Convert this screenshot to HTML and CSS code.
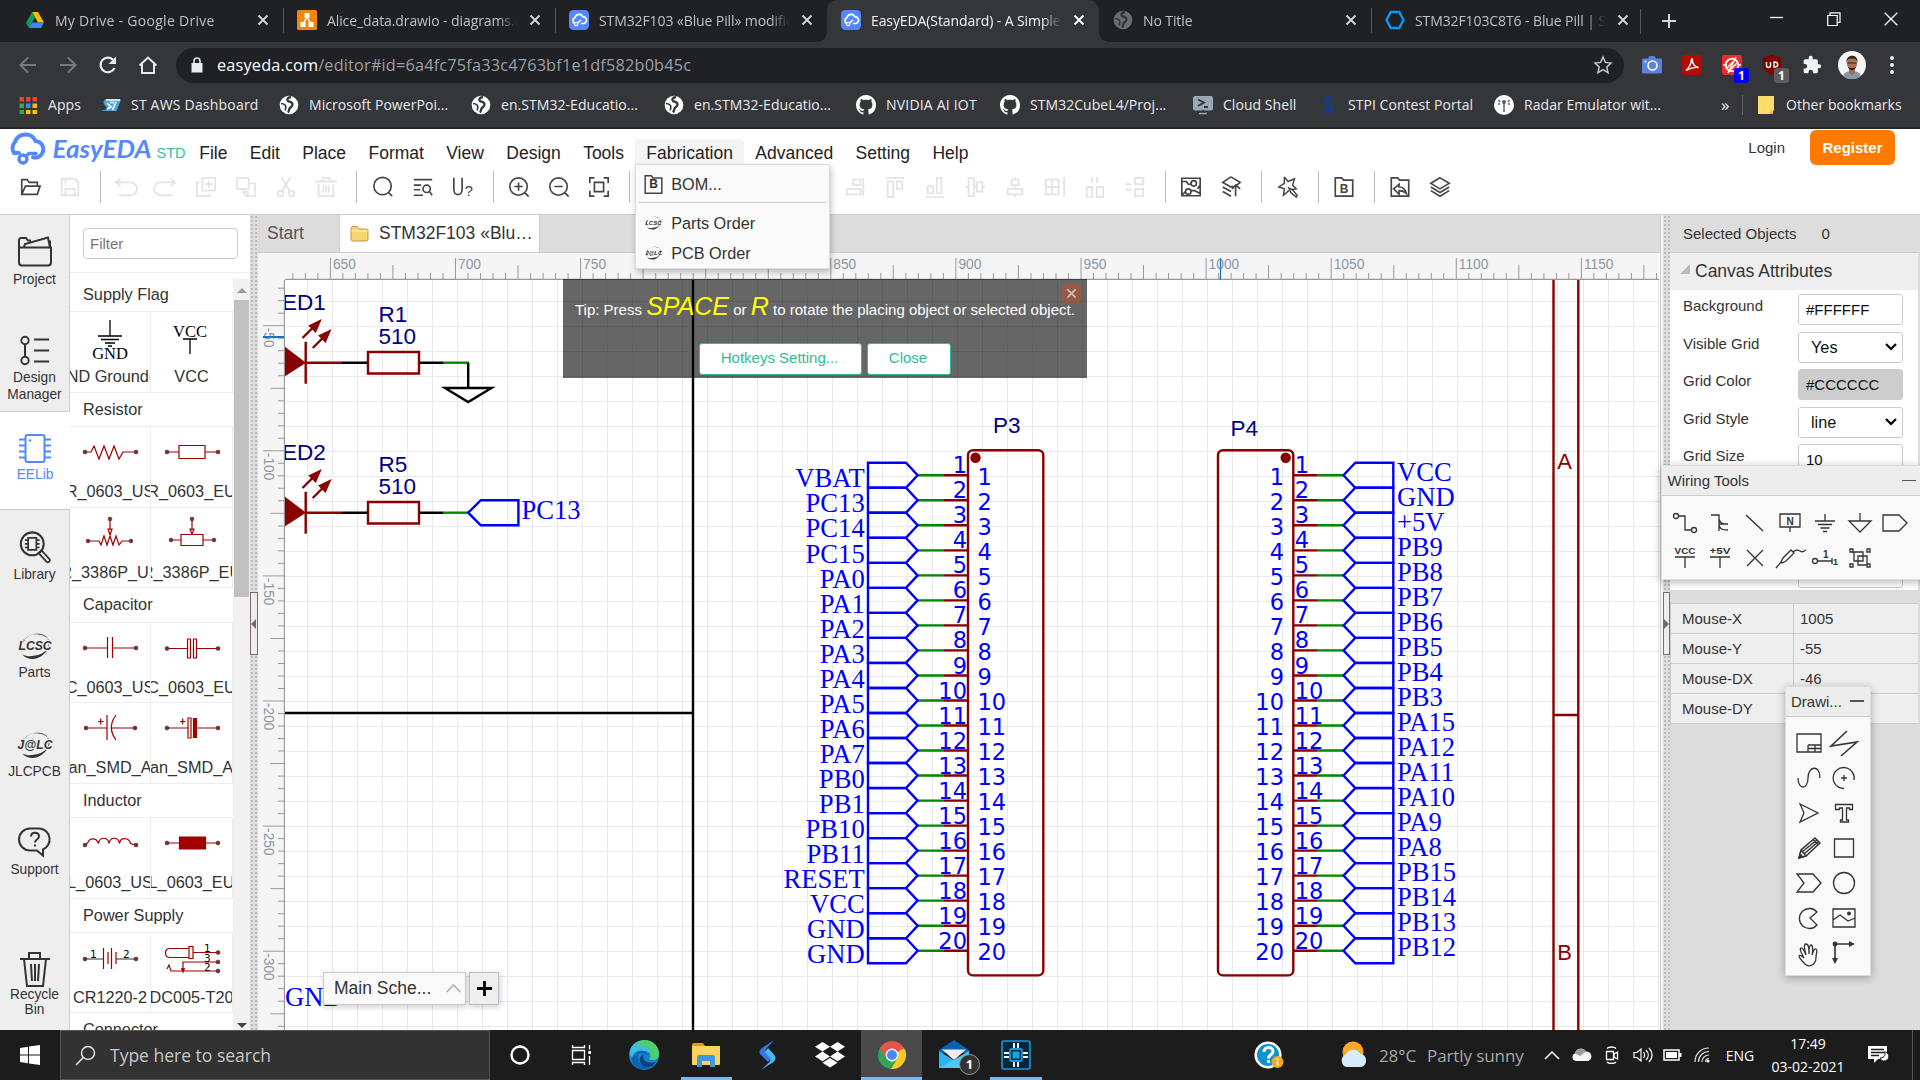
FILE: index.html
```html
<!DOCTYPE html>
<html lang="en">
<head>
<meta charset="utf-8">
<title>EasyEDA(Standard)</title>
<link rel="stylesheet" href="styles.css">
</head>
<body>
<svg class="defs" width="0" height="0">
  <symbol id="close" viewBox="0 0 12 12"><path d="M1.5 1.5l9 9M10.5 1.5l-9 9" stroke="currentColor" stroke-width="1.8"/></symbol>
  <symbol id="globe" viewBox="0 0 20 20"><circle cx="10" cy="10" r="9.3" fill="currentColor"/><path d="M12 2c-3.500.5-4.500 2.500-3 4 1.500 1 4.500.8 4.500 3.500 0 2-2 2.500-3 4-.6 1-.4 2.500-1.500 4" fill="none" stroke="#35363a" stroke-width="2.300"/><path d="M2 8.500c2 .3 4.500 1 4.800 3 .2 1.500-.6 2.500-.3 4" fill="none" stroke="#35363a" stroke-width="1.600"/></symbol>
  <symbol id="eda" viewBox="0 0 20 20"><rect width="20" height="20" rx="4.500" fill="#5588ff"/><path d="M7 13.800H6A3.500 3.500 0 0 1 6 7.500a4.300 4.300 0 0 1 8-.6 3.300 3.300 0 0 1 .4 6.600h-2.500" fill="none" stroke="#fff" stroke-width="1.700"/><circle cx="7.200" cy="14" r="1.700" fill="#5588ff" stroke="#fff" stroke-width="1.300"/><path d="M8.500 13l3.500-3" stroke="#fff" stroke-width="1.600"/></symbol>
  <symbol id="github" viewBox="0 0 16 16"><path fill="#fff" d="M8 0C3.580 0 0 3.580 0 8c0 3.540 2.290 6.530 5.470 7.590.4.070.55-.17.55-.38 0-.19-.01-.82-.01-1.490-2.010.37-2.530-.49-2.690-.94-.09-.23-.48-.94-.82-1.130-.28-.15-.68-.52-.01-.53.63-.01 1.080.58 1.230.82.72 1.210 1.870.87 2.330.66.070-.52.28-.87.51-1.070-1.780-.2-3.640-.89-3.640-3.950 0-.87.31-1.590.82-2.150-.08-.2-.36-1.020.08-2.120 0 0 .67-.21 2.200.82.64-.18 1.320-.27 2-.27s1.360.09 2 .27c1.530-1.040 2.200-.82 2.200-.82.44 1.100.16 1.920.08 2.120.51.56.82 1.270.82 2.150 0 3.070-1.870 3.750-3.650 3.950.29.25.54.73.54 1.480 0 1.070-.01 1.930-.01 2.200 0 .21.15.46.55.38A8.010 8.010 0 0 0 16 8c0-4.420-3.580-8-8-8z"/></symbol>
  <symbol id="lcsc" viewBox="0 0 30 26"><path d="M5 7C10 0 24-1 28 7c-3-4-9-5-13-5-4 0-7 2-10 5zM25 18C20 27 8 27 3 21c4 2 8 2 12 1 4-.5 7-2 10-4z" fill="#333"/><path d="M27 7c3 5 0 10-4 13M3 18C1 14 2 10 5 7" fill="none" stroke="#333" stroke-width="1.200"/></symbol>
  <symbol id="bom" viewBox="0 0 24 24"><path d="M2.500 2v20h19V4.500h-10L9.500 2z" fill="none" stroke="#444" stroke-width="1.700"/></symbol>
</svg>

<header class="tabstrip">
  <div class="tab wide"><svg class="fav" viewBox="0 0 20 20"><path d="M7 2h6l6 10.500h-6z" fill="#fbbc04"/><path d="M7 2l3 5.200L4 18l-3-5z" fill="#0f9d58"/><path d="M7 12.500h12L16 18H4z" fill="#4285f4"/></svg><span>My Drive - Google Drive</span><svg class="x"><use href="#close"/></svg></div>
  <div class="tab line"><svg class="fav" viewBox="0 0 20 20"><rect width="20" height="20" rx="1.500" fill="#f08705"/><path d="M10 7L6 14M10 7l4 7" stroke="#fff" stroke-width="1.500"/><path d="M7.500 3h5v5h-5zM3.500 12h5v5h-5zM11.500 12h5v5h-5z" fill="#fff"/></svg><span>Alice_data.drawio - diagrams.net</span><svg class="x"><use href="#close"/></svg></div>
  <div class="tab line"><svg class="fav"><use href="#eda"/></svg><span>STM32F103 «Blue Pill» modified</span><svg class="x"><use href="#close"/></svg></div>
  <div class="tab active"><svg class="fav"><use href="#eda"/></svg><span>EasyEDA(Standard) - A Simple and</span><svg class="x"><use href="#close"/></svg></div>
  <div class="tab"><svg class="fav dim"><use href="#globe"/></svg><span>No Title</span><svg class="x"><use href="#close"/></svg></div>
  <div class="tab line"><svg class="fav" viewBox="0 0 20 20"><path d="M5.800 2h8.400l4.300 8-4.300 8H5.800L1.500 10z" fill="none" stroke="#0a9bf0" stroke-width="2.400"/></svg><span>STM32F103C8T6 - Blue Pill | STM</span><svg class="x"><use href="#close"/></svg></div>
  <div class="newtab"><svg width="16" height="16" viewBox="0 0 16 16"><path d="M8 1v14M1 8h14" stroke="#d5d7da" stroke-width="2"/></svg></div>
  <div class="wctl">
    <svg width="14" height="14" viewBox="0 0 14 14"><path d="M0 5.500h13" stroke="#fff" stroke-width="1.300"/></svg>
    <svg width="14" height="14" viewBox="0 0 14 14"><path d="M.7 3.500h9.500v10H.7zM3 3.500V.8h10v9.700h-2.500" fill="none" stroke="#fff" stroke-width="1.200"/></svg>
    <svg width="14" height="14" viewBox="0 0 14 14"><path d="M.7.700l12.600 12.600M13.300.700L.7 13.300" stroke="#fff" stroke-width="1.300"/></svg>
  </div>
</header>

<div class="navbar">
  <div class="nav"><svg width="20" height="20" viewBox="0 0 20 20"><path d="M18 10H3M10 2.500L2.500 10l7.500 7.500" fill="none" stroke="#77797c" stroke-width="2"/></svg></div>
  <div class="nav"><svg width="20" height="20" viewBox="0 0 20 20"><path d="M2 10h15M10 2.500l7.500 7.500-7.500 7.500" fill="none" stroke="#77797c" stroke-width="2"/></svg></div>
  <div class="nav"><svg width="20" height="20" viewBox="0 0 20 20"><path d="M16.500 13A7.300 7.300 0 1 1 15 4.700" fill="none" stroke="#e8eaed" stroke-width="2.200"/><path d="M18 1.500V9h-7.500z" fill="#e8eaed"/></svg></div>
  <div class="nav"><svg width="20" height="20" viewBox="0 0 20 20"><path d="M1.500 10.500L10 2.500l8.500 8M4 9v9h12V9" fill="none" stroke="#e8eaed" stroke-width="2"/></svg></div>
  <div class="omnibox"><svg width="12" height="16" viewBox="0 0 12 16"><path d="M.5 6h11v9.500H.5z" fill="#e8eaed"/><path d="M3 6V4a3 3 0 0 1 6 0v2" fill="none" stroke="#e8eaed" stroke-width="1.600"/></svg><div class="url">easyeda.com<i>/editor#id=6a4fc75fa33c4763bf1e1df582b0b45c</i></div><svg width="20" height="20" viewBox="0 0 20 20"><path d="M10 2l2.400 5.400 5.600.6-4.200 3.900 1.200 5.800-5-3-5 3 1.200-5.800L2 8l5.600-.6z" fill="none" stroke="#c5c7ca" stroke-width="1.500"/></svg></div>
  <div class="exts">
    <svg width="20" height="20" viewBox="0 0 20 20"><path d="M1 3.500h5L7.500 1h5L14 3.500h5a1 1 0 0 1 1 1V17a1.500 1.500 0 0 1-1.500 1.500h-17A1.500 1.500 0 0 1 0 17V4.500z" fill="#5b82dc"/><circle cx="10.500" cy="10.500" r="4.500" fill="none" stroke="#fff" stroke-width="1.600"/><circle cx="3.500" cy="6.500" r="1" fill="#fff"/></svg>
    <svg width="20" height="20" viewBox="0 0 20 20"><rect width="20" height="20" rx="3" fill="#b30b00"/><path d="M4 15.500c2.500-2 5.500-7 5.500-11 0-1 1.200-1 1 .5-.5 4 2.500 7 6 7.500-4-.5-8 .5-12.500 3z" fill="none" stroke="#fff" stroke-width="1.400"/></svg>
    <div class="ext"><svg width="20" height="20" viewBox="0 0 20 20"><rect width="20" height="20" rx="2.500" fill="#ee2b2b"/><circle cx="10" cy="10" r="6.300" fill="none" stroke="#fff" stroke-width="1.800"/><path d="M14 2L6 18M5 13l8-8M8 15l7-7M1 10h4M15 10h4" stroke="#fff" stroke-width="1.500"/></svg><b class="badge blue">1</b></div>
    <div class="ext"><svg width="20" height="20" viewBox="0 0 20 20"><path d="M10 0l9 3v7c0 5-4 8-9 10-5-2-9-5-9-10V3z" fill="#800000"/><path d="M4.500 7v3.500a2 2 0 0 0 4 0V7M12 7v5c5 0 5-5 0-5z" fill="none" stroke="#fff" stroke-width="1.400"/></svg><b class="badge">1</b></div>
    <svg width="20" height="20" viewBox="0 0 24 24"><path fill="#f1f3f4" d="M20.500 11H19V7a2 2 0 0 0-2-2h-4V3.500a2.500 2.500 0 0 0-5 0V5H4a2 2 0 0 0-2 2v3.800h1.500a2.700 2.700 0 0 1 0 5.400H2V20a2 2 0 0 0 2 2h3.800v-1.500a2.700 2.700 0 0 1 5.400 0V22H17a2 2 0 0 0 2-2v-4h1.500a2.500 2.500 0 0 0 0-5z"/></svg>
    <svg width="28" height="28" viewBox="0 0 28 28"><circle cx="14" cy="14" r="14" fill="#f5f5f5"/><path d="M5 25c1-4 5-5 9-5s8 1 9 5a14 14 0 0 1-18 0z" fill="#8a97a8"/><path d="M11 16h6v6l-3 2-3-2z" fill="#a06a4b"/><ellipse cx="14" cy="12.500" rx="5" ry="6.500" fill="#a8714f"/><path d="M8.500 12c-1-9 12-10 11 0-1-4-3-5-5.500-4.500C11 7 9.500 8 8.500 12zM10 16c2 1.500 6 1.500 8 0-1 4-7 4-8 0z" fill="#2a1c16"/><path d="M9.500 12h9" stroke="#333" stroke-width="1.200"/></svg>
    <svg width="6" height="20" viewBox="0 0 6 20"><circle cx="3" cy="3" r="2" fill="#e8eaed"/><circle cx="3" cy="10" r="2" fill="#e8eaed"/><circle cx="3" cy="17" r="2" fill="#e8eaed"/></svg>
  </div>
</div>

<div class="bookmarks">
  <div class="bm"><svg viewBox="0 0 20 20"><path d="M1.500 2h4.500v4.500H1.500zM8 2h4.500v4.500H8zM14.500 2H19v4.500h-4.500z" fill="#ea4335"/><path d="M1.500 8.500h4.500V13H1.500z" fill="#34a853"/><path d="M8 8.500h4.500V13H8z" fill="#4285f4"/><path d="M14.500 8.500H19V13h-4.500zM14.500 15H19v4h-4.500zM8 15h4.500v4H8z" fill="#fbbc04"/><path d="M1.500 15h4.500v4H1.500z" fill="#34a853"/></svg>Apps</div>
  <div class="bm"><svg viewBox="0 0 20 20"><path d="M4 4.500h16L15.500 16H0c6-1 7-3 4-5.500C2 8.500 2 6 4 4.500z" fill="#4aa3df"/><path d="M5 5h14M9 7.500h4M6 8l4 4-4 2M15 7l-3.500 8" fill="none" stroke="#fff" stroke-width="1.700"/></svg>ST AWS Dashboard</div>
  <div class="bm"><svg class="white"><use href="#globe"/></svg>Microsoft PowerPoi...</div>
  <div class="bm"><svg class="white"><use href="#globe"/></svg>en.STM32-Educatio...</div>
  <div class="bm"><svg class="white"><use href="#globe"/></svg>en.STM32-Educatio...</div>
  <div class="bm"><svg><use href="#github"/></svg>NVIDIA AI IOT</div>
  <div class="bm"><svg><use href="#github"/></svg>STM32CubeL4/Proj...</div>
  <div class="bm"><svg viewBox="0 0 20 20"><rect x="0" y="1" width="20" height="14.500" rx="2" fill="#9aa7b5"/><path d="M5 4.500l6 3-6 3.500M11 12h4M6 18.500h8M10 15v4" fill="none" stroke="#35363a" stroke-width="1.900"/><path d="M6 18.500h8" stroke="#9aa7b5" stroke-width="1.500"/></svg>Cloud Shell</div>
  <div class="bm"><svg viewBox="0 0 20 20"><path d="M14.500 5C12 2 6 3 6.500 6.500c.5 3.500 7.500 3 7.500 7 0 4-6 4-8.500 1.500" fill="none" stroke="#0f3c8c" stroke-width="3.400"/></svg>STPI Contest Portal</div>
  <div class="bm"><svg viewBox="0 0 20 20"><circle cx="10" cy="10" r="10" fill="#fff"/><circle cx="10" cy="7" r="2" fill="#555"/><path d="M10 8v9M6 7l-1.500-2M14 7l1.500-2M6 9H4M14 9h2" stroke="#567" stroke-width="1.500"/></svg>Radar Emulator wit...</div>
  <div class="bm more">»</div>
  <div class="bm other"><svg viewBox="0 0 20 20"><path d="M2 1h16v14l-2 4H2z" fill="#fbdc6d"/><path d="M13 19h4v-5z" fill="#e5ba3d"/></svg>Other bookmarks</div>
</div>

<div class="apphead">
  <div class="menubar">
    <svg class="logo" width="188" height="38" viewBox="0 0 188 38"><path d="M19 21H14A9 9 0 0 1 15 10 11 11 0 0 1 35.500 9a8.300 8.300 0 0 1 3 15.800c-2 .8-4 1-5.500.5" transform="translate(0 3)" fill="none" stroke="#5588ff" stroke-width="4" stroke-linecap="round"/><circle cx="23" cy="30" r="4" fill="#fff" stroke="#5588ff" stroke-width="3.400"/><path d="M26 27l3-2.500h7" fill="none" stroke="#5588ff" stroke-width="3.400" stroke-linecap="round"/><text x="52.500" y="28.500" class="brand" textLength="99" lengthAdjust="spacingAndGlyphs">EasyEDA</text><text x="156.500" y="29" class="std">STD</text></svg>
    <nav class="menus"><span>File</span><span>Edit</span><span>Place</span><span>Format</span><span>View</span><span>Design</span><span>Tools</span>
      <span class="open">Fabrication
        <div class="dropdown">
          <div class="mi"><svg width="21" height="21"><use href="#bom"/></svg><b>B</b>BOM...</div>
          <hr>
          <div class="mi"><svg width="17" height="14"><use href="#lcsc"/></svg><em>LCSC</em>Parts Order</div>
          <div class="mi"><svg width="17" height="14"><use href="#lcsc"/></svg><em>J@LC</em>PCB Order</div>
        </div>
      </span><span>Advanced</span><span>Setting</span><span>Help</span></nav>
    <div class="account"><span>Login</span><button class="register">Register</button></div>
  </div>
  <div class="tools" id="tools"></div>
</div>

<main class="work">
  <aside class="sidenav">
    <div class="sn"><svg width="36" height="32" viewBox="0 0 36 32"><path d="M2 12V4.500A2 2 0 0 1 4 2.500h5l2 2.500h3M2 12h32v15a3 3 0 0 1-3 3H5a3 3 0 0 1-3-3zM7 11.500l1-3L31 2l2 10M33 5v7" fill="none" stroke="#333" stroke-width="2"/></svg>Project</div>
    <div class="sn"><svg width="32" height="32" viewBox="0 0 32 32"><circle cx="6" cy="6" r="3.700" fill="none" stroke="#333" stroke-width="1.900"/><circle cx="6" cy="26" r="3.700" fill="none" stroke="#333" stroke-width="1.900"/><path d="M6 10v12M15 5h15M15 16h15M15 27h15" stroke="#333" stroke-width="2"/></svg>Design<br>Manager</div>
    <div class="sn on"><svg width="32" height="32" viewBox="0 0 32 32"><rect x="6.500" y="2.500" width="19" height="27" rx="2" fill="none" stroke="#5588ff" stroke-width="2"/><circle cx="11" cy="8" r="1.300" fill="#5588ff"/><path d="M0 7h6M0 13h6M0 19h6M0 25h6M26 7h6M26 13h6M26 19h6M26 25h6" stroke="#5588ff" stroke-width="1.800"/></svg>EELib</div>
    <div class="sn"><svg width="34" height="36" viewBox="0 0 34 36"><circle cx="14" cy="14" r="12.500" fill="none" stroke="#333" stroke-width="2.200"/><path d="M9.500 7.500h9v13h-9zM6 10h3M6 14h3M6 18h3M19 10h3M19 14h3M19 18h3" fill="none" stroke="#333" stroke-width="1.900"/><path d="M21 24l3-3 8.500 9.500a2 2 0 0 1-3 3z" fill="none" stroke="#333" stroke-width="2"/></svg>Library</div>
    <div class="sn"><svg width="34" height="26" viewBox="-2 0 34 26"><use href="#lcsc" width="30" height="26"/><text x="15" y="16.500" class="lc" text-anchor="middle">LCSC</text></svg>Parts</div>
    <div class="sn"><svg width="34" height="26" viewBox="-2 0 34 26"><use href="#lcsc" width="30" height="26"/><text x="15" y="16.500" class="lc" text-anchor="middle">J@LC</text></svg>JLCPCB</div>
    <div class="sn"><svg width="36" height="32" viewBox="0 0 36 32"><path d="M13 2h10a11 11 0 0 1 3 21v6l-6-5h-7A11 11 0 0 1 13 2z" fill="none" stroke="#333" stroke-width="2"/><path d="M14 10c0-5 8-5 8 0 0 3-4 2.500-4 6M18 18v2" fill="none" stroke="#333" stroke-width="2"/></svg>Support</div>
    <div class="sn bin"><svg width="30" height="36" viewBox="0 0 30 36"><path d="M0 8h30M9 8V2h11v6M4 8l3 27h16l3-27M11 13l1 17M15 13v17M19 13l-1 17" fill="none" stroke="#333" stroke-width="2"/></svg>Recycle<br>Bin</div>
  </aside>

  <section class="lib">
    <div class="filter"><input placeholder="Filter"></div>
    <div class="liblist">
      <div class="parts">
        <h4>Supply Flag</h4>
        <div class="row"><div class="cell"><svg viewBox="0 0 80 55"><path d="M40 8v16M28 24h24M31 27.500h18M35 31h10M38 34h4" stroke="#000" stroke-width="1.300"/><text x="40" y="47" class="tms" text-anchor="middle">GND</text></svg><span>GND Ground(U</span></div><div class="cell"><svg viewBox="0 0 80 55"><text x="38" y="24.500" class="tms" text-anchor="middle">VCC</text><path d="M31 27h14M38 27v15" stroke="#000" stroke-width="1.300"/></svg><span>VCC</span></div></div>
        <h4>Resistor</h4>
        <div class="row"><div class="cell"><svg viewBox="0 0 80 55" class="dk"><path d="M15 25h6l3-6 5 13 5-13 5 13 5-13 5 13 4-7h12"/><circle cx="15" cy="25" r="2"/><circle cx="66" cy="25" r="2"/></svg><span>R_0603_US</span></div><div class="cell"><svg viewBox="0 0 80 55" class="dk"><path d="M15 25h12M27 18.500h26v13H27zM53 25h13"/><circle cx="15" cy="25" r="2"/><circle cx="66" cy="25" r="2"/></svg><span>R_0603_EU</span></div></div>
        <div class="row"><div class="cell"><svg viewBox="0 0 80 55" class="dk"><path d="M18 33h11l2 4 3-9 3 9 3-9 3 9 3-9 3 9 3-4h9M40 11v11M38 21h4l-2 6z"/><circle cx="18" cy="33" r="1.900"/><circle cx="61" cy="33" r="1.900"/><circle cx="40" cy="11" r="1.900"/></svg><span>R_3386P_US</span></div><div class="cell"><svg viewBox="0 0 80 55" class="dk"><path d="M19 32h10M29 26.500h22v11H29zM51 32h11M40 11v11M38 21h4l-2 5z"/><circle cx="19" cy="32" r="1.900"/><circle cx="62" cy="32" r="1.900"/><circle cx="40" cy="11" r="1.900"/></svg><span>R_3386P_EU</span></div></div>
        <h4>Capacitor</h4>
        <div class="row"><div class="cell"><svg viewBox="0 0 80 55" class="dk"><path d="M15 25h22.500M42.500 25H66M37.500 14v21M42.500 14v21" stroke-width="1.600"/><circle cx="15" cy="25" r="2"/><circle cx="66" cy="25" r="2"/></svg><span>C_0603_US</span></div><div class="cell"><svg viewBox="0 0 80 55" class="dk"><path d="M15 25.500h20.500M44.500 25.500H66M35.500 16h3v19h-3zM41.500 16h3v19h-3z"/><circle cx="15" cy="25.500" r="2"/><circle cx="66" cy="25.500" r="2"/></svg><span>C_0603_EU</span></div></div>
        <div class="row"><div class="cell"><svg viewBox="0 0 80 55" class="dk"><path d="M16 25h21M41.500 25H65M37 12v25M46 12c-6 8-6 17 0 25M28 18.500h5.500M30.700 15.500v6"/><circle cx="16" cy="25" r="2"/><circle cx="65" cy="25" r="2"/></svg><span>an_SMD_A</span></div><div class="cell"><svg viewBox="0 0 80 55" class="dk"><path d="M15 25h21M45 25h21M36 15h3v20h-3zM28 18.500h5.500M30.700 15.500v6"/><path d="M41.500 15.500h3v19h-3z" class="fill"/><circle cx="15" cy="25" r="2"/><circle cx="66" cy="25" r="2"/></svg><span>an_SMD_A</span></div></div>
        <h4>Inductor</h4>
        <div class="row"><div class="cell"><svg viewBox="0 0 80 55" class="dk"><path d="M15 27l3-2.500c1-4 8-6 10.500 1 1-7 9.500-7 10.500 0 1-7 9.500-7 10.500 0 1-7 9.500-6 11 0l5 1.500"/><circle cx="15" cy="27" r="2"/><circle cx="66" cy="27" r="2"/></svg><span>L_0603_US</span></div><div class="cell"><svg viewBox="0 0 80 55" class="dk"><path d="M15 25h51"/><path d="M27.500 19h26v12h-26z" class="fill"/><circle cx="15" cy="25" r="2"/><circle cx="66" cy="25" r="2"/></svg><span>L_0603_EU</span></div></div>
        <h4>Power Supply</h4>
        <div class="row"><div class="cell"><svg viewBox="0 0 80 55" class="dk"><path d="M33.500 15v21M38 19v12M41.500 15v21M46 19v12"/><path d="M15 26h18M46 26h20" class="ink"/><circle cx="15" cy="26" r="2"/><circle cx="66" cy="26" r="2"/><text x="20" y="25">1</text><text x="53" y="25">2</text></svg><span>CR1220-2</span></div><div class="cell"><svg viewBox="0 0 80 55" class="dk"><path d="M37 15.500H18c-6 0-6 9 0 9h19M37 13.500h4v12h-4zM41 19.500h25M66 29H31v9M15 36l2-4 2 6h47M29.500 35l1.500 4 1.500-4"/><circle cx="66" cy="19.500" r="2"/><circle cx="66" cy="29" r="2"/><circle cx="66" cy="38" r="2"/><text x="52" y="18.500">1</text><text x="52" y="28.500">3</text><text x="52" y="37.500">2</text></svg><span>DC005-T20</span></div></div>
        <h4>Connector</h4>
      </div>
      <div class="scroll"><div class="up"></div><div class="thumb"></div><div class="down"></div></div>
    </div>
  </section>
  <div class="splitter"><div class="grip"><i></i></div></div>

  <section class="center">
    <div class="doctabs"><div class="dt">Start</div><div class="dt cur"><svg width="19" height="17" viewBox="0 0 19 17"><path d="M1 3.500A2 2 0 0 1 3 1.500h4L9 4h7a2 2 0 0 1 2 2v8a2 2 0 0 1-2 2H3a2 2 0 0 1-2-2z" fill="#f7d774" stroke="#c8952f"/><path d="M1.500 6h16" stroke="#fff2b8"/></svg>STM32F103 «Blu…</div></div>
    <div class="drawing">
      <svg id="ruler-h" class="ruler-h" viewBox="258 253 1401 27"></svg>
      <svg id="ruler-v" class="ruler-v" viewBox="258 280 27 750"></svg>
      <svg id="sheet" class="sheet" viewBox="285 280 1375 750"></svg>
      <div class="tip">
        <p>Tip: Press <em>SPACE</em> or <em>R</em> to rotate the placing object or selected object.</p>
        <div class="tipbtns"><button class="hk">Hotkeys Setting...</button><button>Close</button></div>
        <i class="tipx"><svg width="11" height="11"><use href="#close"/></svg></i>
      </div>
      <div class="sheets"><div class="sheettab">Main Sche...<svg width="15" height="9" viewBox="0 0 15 9"><path d="M.7 8l6.800-7 6.800 7" fill="none" stroke="#aaa" stroke-width="1.400"/></svg></div><div class="plus"><svg width="15" height="15" viewBox="0 0 15 15"><path d="M7.500 0v15M0 7.500h15" stroke="#000" stroke-width="2.800"/></svg></div></div>
    </div>
  </section>
  <div class="splitter right"><div class="grip"><i></i></div></div>

  <aside class="props">
    <div class="sel">Selected Objects<span>0</span></div>
    <div class="sec"><i></i>Canvas Attributes</div>
    <div class="form">
      <div class="f"><label>Background</label><div class="in">#FFFFFF</div></div>
      <div class="f"><label>Visible Grid</label><div class="in pick">Yes<svg width="12" height="8" viewBox="0 0 12 8"><path d="M1 1l5 5 5-5" fill="none" stroke="#000" stroke-width="2.200"/></svg></div></div>
      <div class="f"><label>Grid Color</label><div class="in gray">#CCCCCC</div></div>
      <div class="f"><label>Grid Style</label><div class="in pick">line<svg width="12" height="8" viewBox="0 0 12 8"><path d="M1 1l5 5 5-5" fill="none" stroke="#000" stroke-width="2.200"/></svg></div></div>
      <div class="f"><label>Grid Size</label><div class="in">10</div></div>
      <div class="f last"><label></label><div class="in"></div></div>
    </div>
    <div class="mouse"><div>Mouse-X</div><div>1005</div><div>Mouse-Y</div><div>-55</div><div>Mouse-DX</div><div>-46</div><div>Mouse-DY</div><div></div></div>
  </aside>

  <div class="float wiring"><div class="fh">Wiring Tools<i></i></div><div class="fg" id="wiring"></div></div>
  <div class="float draw"><div class="fh">Drawi...<i></i></div><div class="fg" id="draw"></div></div>
</main>

<footer class="taskbar">
  <div class="start"><svg width="20" height="20" viewBox="0 0 20 20"><path d="M0 3l8-1.200v7.700H0zM9 1.600L20 0v9.500H9zM0 10.500h8v7.700L0 17zM9 10.500h11V20L9 18.400z" fill="#fff"/></svg></div>
  <div class="search"><svg width="21" height="21" viewBox="0 0 21 21"><circle cx="13" cy="8" r="6.500" fill="none" stroke="#eee" stroke-width="1.400"/><path d="M8.300 12.500L1 20" stroke="#eee" stroke-width="1.500"/></svg>Type here to search</div>
  <div class="apps">
    <div class="app"><svg width="20" height="20" viewBox="0 0 20 20"><circle cx="10" cy="10" r="8.500" fill="none" stroke="#fff" stroke-width="2.400"/></svg></div>
    <div class="app"><svg width="22" height="20" viewBox="0 0 22 20"><path d="M1.500 5.500h12v9h-12zM1.500 0v2.500h12V0M1.500 20v-2.500h12V20M18.500 0v4.500M18.500 11v9" fill="none" stroke="#fff" stroke-width="1.300"/><path d="M17.300 6h2.700v3h-2.700z" fill="#fff"/></svg></div>
    <div class="app"><svg width="30" height="30" viewBox="0 0 30 30"><circle cx="15" cy="15" r="15" fill="#1380d0"/><path d="M1 11C4-3 27-4 30 13c.5 6-5 8-10 6 3-2 2-8-5-8-6 0-9 5-9 9C1 16 0 14 1 11z" fill="#38bde4"/><path d="M15 0c10 0 15 7 15 14 0 5-5 7-10 5 2-1 2-3 1-5C20 6 12 4 6 6c2-4 5-6 9-6z" fill="#4fcf6b"/><path d="M9 14c-2 8 5 15 14 12-8 6-18 3-20-4-1-5 2-10 7-11 5-1 8 2 8 4-4-2-7-2-9-1z" fill="#0d63b5"/><path d="M15 15c-3 4 3 10 12 7-2 3-5 5-8 5-9 0-11-11-4-12z" fill="#123f7a"/></svg></div>
    <div class="app run"><svg width="28" height="24" viewBox="0 0 28 24"><path d="M0 1.500A1.500 1.500 0 0 1 1.500 0H11l2 3H0z" fill="#dc9a08"/><path d="M0 3h28v18a1 1 0 0 1-1 1H1a1 1 0 0 1-1-1z" fill="#fdd35b"/><path d="M5 14a2 2 0 0 1 2-2h14a2 2 0 0 1 2 2v10h-5v-6h-8v6H5z" fill="#3e9add"/></svg></div>
    <div class="app"><svg width="18" height="30" viewBox="0 0 18 30"><path d="M15 0L3 8C.5 10-.5 12 1.500 14.500L9 22l3-4-5-6c-1-1.500 0-3 1.500-4.500z" fill="#3a74e4"/><path d="M9 8l-3 4 5 6c1 1.500.5 3-1 4.500L2 30l11-7c4-3 4.500-5.500 2-8.500z" fill="#49b9ef"/></svg></div>
    <div class="app"><svg width="30" height="26" viewBox="0 0 30 26"><path d="M7.500 0L15 4.800 7.500 9.600 0 4.800zM22.500 0L30 4.800 22.500 9.600 15 4.800zM7.500 9.600L15 14.400l-7.500 4.800L0 14.400zM22.500 9.600l7.500 4.800-7.500 4.800L15 14.400zM15 16l7.500 4.800L15 25.600l-7.500-4.800z" fill="#fff"/></svg></div>
    <div class="app cur"><svg width="28" height="28" viewBox="0 0 28 28"><path d="M14 14L1.900 7A14 14 0 0 1 26.100 7z" fill="#e6554a"/><path d="M14 14V28A14 14 0 0 1 1.900 7z" fill="#33a457"/><path d="M14 14L26.100 7A14 14 0 0 1 13 28z" fill="#fcca28"/><path d="M14 7.600H26.500L25 5.500H14zM8.300 17L2 7l2.500-2L9 12z" fill="#e6554a"/><path d="M19.600 17L13 28l-2-.3L15 19z" fill="#33a457"/><circle cx="14" cy="14" r="6.400" fill="#fff"/><circle cx="14" cy="14" r="5" fill="#4688f4"/></svg></div>
    <div class="app mail"><svg width="32" height="30" viewBox="0 0 32 30"><path d="M0 10L15 0l15 10v3H0z" fill="#0a63b0"/><path d="M3 9.500h24L15 20z" fill="#eee"/><path d="M0 11l15 9.500L30 11v17H0z" fill="#2cb4f0"/><path d="M30 11v17L0 28z" fill="#6ad6fb" opacity=".6"/></svg><b>1</b></div>
    <div class="app run"><svg width="30" height="30" viewBox="0 0 30 30"><rect x="1" y="1" width="28" height="28" rx="2" fill="#04263a" stroke="#169ad6" stroke-width="1.600"/><path d="M13 3v5M17 3v5M13 22v5M17 22v5M3 13h5M3 17h5M22 13h5M22 17h5" stroke="#fff" stroke-width="1.900"/><rect x="9" y="9" width="12" height="12" rx="2" fill="#04263a" stroke="#169ad6" stroke-width="1.800"/><path d="M11.500 11.500h7v7h-7z" fill="#14a7e6"/></svg></div>
  </div>
  <div class="tray">
    <svg width="30" height="30" viewBox="0 0 30 30"><circle cx="14" cy="15" r="12.300" fill="#1192d0" stroke="#fff" stroke-width="2.500"/><path d="M10 12c0-6 9-6 9-.5 0 3.500-4.500 3-4.500 7M14.500 20v3" fill="none" stroke="#fff" stroke-width="3"/><circle cx="23.500" cy="22" r="6" fill="#f5a81c"/><path d="M23.500 18.500v1.700M23.500 21.500v4" stroke="#fff" stroke-width="1.700"/></svg>
    <div class="weather"><svg width="28" height="28" viewBox="0 0 28 28"><circle cx="13" cy="11" r="10.500" fill="#fda829"/><path d="M7 26a6.500 6.500 0 0 1-1-12.500 8 8 0 0 1 14-1 7 7 0 0 1 1.500 13.500z" fill="#d4edfb"/></svg><span>28°C</span><span>Partly sunny</span></div>
    <svg width="16" height="9" viewBox="0 0 16 9"><path d="M1 8l7-7 7 7" fill="none" stroke="#fff" stroke-width="1.500"/></svg>
    <svg width="20" height="14" viewBox="0 0 20 14"><path d="M4 13a4 4 0 0 1-1-7.700A6 6 0 0 1 14 3.500 5 5 0 0 1 16.500 13z" fill="#f5f5f5"/><path d="M3 5.500C5 0 12-1 14 3.500L8 8z" fill="#9d9d9d"/></svg>
    <svg width="16" height="18" viewBox="0 0 16 18"><path d="M2.500 5.500h7v8h-7zM10 8l3.500-2v7L10 11zM3 2.500c2-2 7-2 9 0M3 16c2 2 7 2 9 0" fill="none" stroke="#fff" stroke-width="1.300"/></svg>
    <svg width="20" height="16" viewBox="0 0 20 16"><path d="M1 5.500h3L8 2v12L4 10.500H1zM10.500 5c1.500 2 1.500 4 0 6M13 3c3 3 3 7 0 10M16 1c4 4.500 4 9.500 0 14" fill="none" stroke="#fff" stroke-width="1.200"/></svg>
    <svg width="19" height="12" viewBox="0 0 19 12"><path d="M1 1h15v10H1z" fill="none" stroke="#fff" stroke-width="1.500"/><path d="M3 3h11v6H3zM16 4h2.500v4H16z" fill="#fff"/></svg>
    <svg width="16" height="16" viewBox="0 0 16 16"><path d="M1 15C1 7 7 1 15 1M4.500 15C4.500 9 9 4.500 15 4.500M8 15c0-4 3-7 7-7M11.500 15c0-2 1.500-3.500 3.500-3.500" fill="none" stroke="#ddd" stroke-width="1.200"/><circle cx="14" cy="14" r="1.600" fill="#fff"/></svg>
    <span class="lang">ENG</span>
    <div class="clock">17:49<br>03-02-2021</div>
    <svg width="22" height="20" viewBox="0 0 22 20"><path d="M1 1h19v13h-9l-4 4v-4H1z" fill="#fff"/><path d="M4 4.500h13M4 7.500h13M4 10.500h8" stroke="#1c1c1c" stroke-width="1.300"/><path d="M13 13a4.500 4.500 0 1 0 4-6c2 2 1 6-4 6z" fill="#fff" stroke="#1c1c1c"/></svg>
    <i></i>
  </div>
</footer>
<script src="script.js"></script>
</body>
</html>
```
FILE: styles.css
```css
* { box-sizing: border-box; }
body { margin: 0; width: 1920px; height: 1080px; overflow: hidden; font-family: "Liberation Sans", Arial, sans-serif; font-size: 15px; color: #333; background: #fff; display: flex; flex-direction: column; }
button { font-family: inherit; }
i, em { font-style: normal; }
.defs { position: absolute; }
svg { display: block; flex: none; }

/* browser chrome */
.tabstrip { height: 42px; flex: none; background: #202124; display: flex; align-items: center; padding-left: 11px; font: 14px "Open Sans", sans-serif; letter-spacing: -.1px; color: #bdc1c6; }
.tab { position: relative; width: 272px; height: 42px; display: flex; align-items: center; padding: 0 14px 2px 14px; }
.tab.wide { letter-spacing: .28px; }
.tab .fav { width: 20px; height: 20px; margin-right: 10px; }
.tab .fav.dim { color: #6b6d70; }
.tab span { width: 190px; overflow: hidden; white-space: nowrap; -webkit-mask-image: linear-gradient(90deg, #000 90%, transparent); mask-image: linear-gradient(90deg, #000 90%, transparent); }
.tab .x { width: 12px; height: 12px; margin-left: 12px; color: #d5d7da; }
.tab.line::before { content: ""; width: 1px; height: 25px; background: #55575b; margin: 0 0 0 -14px; }
.tab.line .fav { margin-left: 13px; }
.tab.active { background: #35363a; border-radius: 10px 10px 0 0; color: #f1f3f4; }
.tab.active::before, .tab.active::after { content: ""; position: absolute; bottom: 0; width: 10px; height: 10px; }
.tab.active::before { left: -10px; background: radial-gradient(circle at 0 0, transparent 10px, #35363a 10px); }
.tab.active::after { right: -10px; background: radial-gradient(circle at 100% 0, transparent 10px, #35363a 10px); }
.tab.active .x { color: #fff; }
.newtab { display: flex; align-items: center; width: 60px; margin-left: -3px; }
.newtab::before { content: ""; width: 1px; height: 25px; background: #55575b; }
.newtab svg { margin-left: 20px; }
.wctl { margin-left: auto; display: flex; gap: 43px; padding-right: 22px; padding-bottom: 4px; }

.navbar { height: 46px; flex: none; background: #35363a; display: flex; align-items: center; padding-left: 8px; }
.nav { width: 40px; display: flex; justify-content: center; }
.omnibox { margin-left: 8px; width: 1448px; height: 35px; border-radius: 18px; background: #202124; display: flex; align-items: center; padding: 0 11px 0 15px; font: 16.300px "Open Sans", sans-serif; letter-spacing: .18px; color: #fff; }
.url { flex: 1; padding-left: 14px; padding-bottom: 1px; }
.url i { color: #9aa0a6; }
.exts { flex: 1; display: grid; grid-template-columns: 40px 40px 40px 40px 39px 42px 38px; justify-items: center; align-items: center; padding-left: 8px; }
.ext { position: relative; }
.badge { position: absolute; left: 12px; top: 13px; width: 15px; height: 15px; border-radius: 3px; background: #5c5c5c; color: #fff; font: bold 12px/15px "Open Sans", sans-serif; text-align: center; }
.badge.blue { background: #0000f5; }

.bookmarks { height: 41px; flex: none; background: #35363a; border-bottom: 2px solid #242528; display: grid; grid-template-columns: 83px 178px 192px 193px 192px 144px 193px 125px 176px 227px 15px 1fr; padding: 0 0 6px 18px; align-items: center; font: 14px "Open Sans", sans-serif; letter-spacing: .05px; color: #e8eaed; }
.bm { display: flex; align-items: center; white-space: nowrap; }
.bm svg { width: 20px; height: 20px; margin-right: 10px; }
.bm .white { color: #fff; }
.bm:nth-child(2), .bm:nth-child(6) { letter-spacing: .2px; }
.bm.more { font-size: 17px; }
.bm.other { padding-left: 7px; }
.bm.other svg { margin-right: 10px; }
.bm.other::before { content: ""; width: 1px; height: 20px; background: #5f6368; margin-right: 13px; margin-left: -1px; }

/* EasyEDA header */
.apphead { height: 86px; flex: none; border-bottom: 1px solid #ccc; }
.menubar { height: 40px; display: flex; }
.brand { font: italic bold 25.500px "Lato", "Liberation Sans", sans-serif; fill: #5588ff; }
.std { font-size: 14.500px; fill: #36c29b; }
.menus { display: flex; font-size: 17.500px; color: #222; padding-top: 10px; height: 35px; }
.menus > span { position: relative; padding: 0 11.200px; line-height: 28px; height: 25px; }
.menus > .open { background: #f4f4f4; border-radius: 4px 4px 0 0; }
.dropdown { position: absolute; left: 0; top: 25px; z-index: 20; width: 195px; height: 105px; background: #fafafa; border: 1px solid #ddd; box-shadow: 1px 3px 6px rgba(0,0,0,.25); padding-top: 4px; font-size: 16.250px; color: #333; }
.dropdown hr { margin: 3px 3px 5px; border: 0; border-top: 1px solid #ccc; }
.mi { position: relative; display: flex; align-items: center; height: 30px; padding-left: 7px; }
.mi svg { margin-right: 7px; }
.mi svg[width="17"] { margin: 0 9px 0 2px; }
.mi b { position: absolute; left: 13px; font-size: 12px; }
.mi em { position: absolute; left: 9px; font: italic bold 6px "Liberation Sans", sans-serif; }
.account { margin-left: auto; display: flex; padding: 1px 25px 0 0; align-items: flex-start; }
.account span { line-height: 36px; padding-right: 25px; }
.register { width: 85px; height: 35px; border: 0; border-radius: 6px; background: #ff7a00; color: #fff; font-weight: bold; font-size: 15px; padding: 0; }
.tools { height: 45px; display: flex; align-items: center; padding: 0 0 9px 10px; }
.tools .tb { width: 40px; display: flex; justify-content: center; }
.tools .tb svg { width: 22px; height: 22px; fill: none; stroke: #444; stroke-width: 1.800; overflow: visible; }
.tools .off svg { stroke: #e4e4e4; stroke-width: 2; }
.tools .sep { width: 16.300px; height: 32px; display: flex; padding-left: 10px; }
.tools .sep::before { content: ""; width: 1px; background: #bbb; }
.tools text { stroke: none; fill: #444; font-weight: bold; }

/* left side */
.work { flex: 1; min-height: 0; display: flex; position: relative; background: #dcdcdc; }
.sidenav { width: 70px; background: #eee; border-right: 1px solid #ccc; display: flex; flex-direction: column; font-size: 13.750px; line-height: 17px; text-align: center; }
.sn { height: 98.500px; flex: none; display: flex; flex-direction: column; align-items: center; }
.sn svg { height: 33px; margin: 21px 0 2px; }
.sn.on { background: #fff; color: #5588ff; border: 1px solid #ccc; border-width: 1px 0; width: 70px; }
.sn.on svg { margin: 20px 0 1px; }
.sn:nth-child(1) svg { margin-bottom: 3px; }
.sn:nth-child(5) svg, .sn:nth-child(6) svg { width: 36px; height: 28px; margin: 24px 0 4px; }
.sn:nth-child(1) { margin-top: -1px; }
.sn.bin { margin-top: 28px; line-height: 15.500px; }
.sn.bin svg { height: 36px; margin: 19px 0 0; }
.lc { font: italic bold 11.500px "Liberation Sans", sans-serif; fill: #333; stroke: #eee; stroke-width: 2.500px; paint-order: stroke; }
.lib { width: 180px; background: #fff; display: flex; flex-direction: column; }
.filter { height: 58px; flex: none; border-bottom: 1px solid #eee; padding: 13px 0 0 13px; }
.filter input { width: 155px; height: 31px; border: 1px solid #ccc; border-radius: 4px; padding: 0 6px; font: 15px "Liberation Sans", sans-serif; display: block; }
.filter input::placeholder { color: #757575; }
.liblist { flex: 1; min-height: 0; display: flex; }
.parts { width: 163px; overflow: hidden; padding-top: 5px; font-size: 16.250px; }
.parts h4 { margin: 0; font: inherit; height: 34.400px; line-height: 32.500px; padding-left: 13px; border-bottom: 1px solid #eee; }
.row { display: flex; height: 80.500px; border-bottom: 1px solid #eee; }
.cell { width: 81px; border-right: 1px solid #eee; overflow: hidden; display: flex; flex-direction: column; align-items: center; }
.cell + .cell { width: 82px; }
.cell svg { width: 80px; height: 55px; }
.cell span { white-space: nowrap; line-height: 19px; }
.dk path { fill: none; stroke: #a00000; stroke-width: 1.200; }
.dk path.fill { fill: #a00000; }
.dk path.ink { stroke: #333; }
.dk circle { fill: #444; stroke: #a00000; stroke-width: .5; }
.dk text { font: 10.500px "DejaVu Sans", sans-serif; }
.tms { font: 16.500px "Liberation Serif", serif; }
.scroll { width: 17px; margin-top: 6px; background: #f1f1f1; display: flex; flex-direction: column; align-items: center; }
.up { border: 5px solid transparent; border-top: 0; border-bottom: 5px solid #999; margin: 9px 0 7px; }
.thumb { width: 15px; height: 297px; background: #c1c1c1; }
.down { border: 5px solid transparent; border-bottom: 0; border-top: 5px solid #444; margin: auto 0 2px; }
.splitter { position: relative; width: 8px; background: radial-gradient(circle, #bcbcbc .8px, transparent 1px) 0 0 / 4px 4px #dedede; }
.grip { position: absolute; left: 0; top: 377px; width: 8px; height: 63px; border: 1px solid #7b6b6b; background: #eee; display: flex; align-items: center; }
.grip i { border: 5px solid transparent; border-left: 0; border-right: 5px solid #7b6b6b; }
.splitter.right { width: 9px; border-left: 2px solid #f7f7f7; }
.right .grip { width: 7px; }
.right .grip i { border: 5px solid transparent; border-right: 0; border-left: 5px solid #7b6b6b; }

/* centre */
.center { width: 1403px; display: flex; flex-direction: column; border-right: 1px solid #ccc; }
.doctabs { height: 38px; flex: none; background: #dcdcdc; border-bottom: 1px solid #ccc; display: flex; font-size: 17.500px; color: #555; }
.dt { width: 81px; padding-left: 9px; line-height: 36px; }
.dt.cur { width: 201px; background: #fff; border: 1px solid #ccc; border-width: 0 1px; color: #333; display: flex; align-items: center; white-space: nowrap; padding: 0 0 1px 10px; }
.dt.cur svg { margin-right: 10px; margin-top: 1px; }
.drawing { flex: 1; min-height: 0; position: relative; display: grid; grid-template-columns: 27px 1375px; grid-template-rows: 27px 750px; background: #fff; }
.ruler-h { grid-column: 1 / 3; width: 1401px; height: 27px; background: #f5f5f5; }
.ruler-v { width: 27px; height: 750px; background: #f5f5f5; }
.ruler-h text, .ruler-v text { font-size: 13.750px; fill: #8a97a3; }
.ruler-h path, .ruler-v path { stroke: #999; fill: none; }
.ruler-h .mark, .ruler-v .mark { stroke: #1272c4; stroke-width: 2; }
.sheet { width: 1375px; height: 750px; background: #fff; }
.sheet path, .sheet rect { fill: none; stroke-width: 2.400; }
.sheet .grid { stroke: #e9e9e9; stroke-width: 1; }
.sheet .red { stroke: #880000; } .sheet .blue { stroke: #00f; } .sheet .green { stroke: #008800; } .sheet .black { stroke: #000; }
.sheet path.solid, .sheet .solid { fill: #880000; stroke: none; }
.sheet .lbl { font-size: 22.500px; fill: #000080; }
.sheet .frame { font-size: 22px; fill: #880000; }
.sheet .num { font: 22.500px "DejaVu Sans", sans-serif; fill: #00f; }
.sheet .net { font: 26.600px "Liberation Serif", serif; fill: #00f; }
.tip { position: absolute; left: 305px; top: 26px; width: 524px; height: 99px; background: rgba(0,0,0,.6); color: #fff; }
.tip p { margin: 0; padding: 8px 0 0 12px; line-height: 38px; height: 64px; white-space: nowrap; }
.tip em { font-size: 25px; font-style: italic; color: #ff0; }
.tipbtns { display: flex; gap: 5px; padding-left: 136px; }
.tip button { height: 32px; width: 84px; background: #fff; border: 1px solid #2bbd99; border-radius: 3px; color: #2bbd99; font-size: 15px; padding: 0 2px 3px 0; }
.tip button.hk { width: 163px; }
.tipx { position: absolute; right: 6px; top: 5px; width: 19px; height: 19px; border-radius: 4px; background: #a5563c; color: #ddd; display: flex; align-items: center; justify-content: center; opacity: .8; }
.sheets { position: absolute; left: 65px; top: 719px; display: flex; gap: 3px; }
.sheettab { width: 143px; height: 33px; background: #f9f9f9; border: 1px solid #ccc; box-shadow: 1px 2px 6px rgba(0,0,0,.2); display: flex; align-items: center; font-size: 17.500px; padding: 0 4px 0 10px; justify-content: space-between; }
.plus { width: 30px; height: 33px; background: #eee; border: 1px solid #bbc; display: flex; align-items: center; justify-content: center; box-shadow: 1px 2px 6px rgba(0,0,0,.2); }

/* right side */
.props { width: 248px; }
.sel { height: 38px; background: #ddd; line-height: 37px; padding-left: 13px; border-bottom: 1px solid #ccc; }
.sel span { margin-left: 25px; }
.sec { height: 37px; background: #eee; line-height: 34px; font-size: 17.500px; padding: 0 0 2px 10px; display: flex; align-items: center; }
.sec i { border: 5px solid transparent; border-right-color: #bbb; border-bottom-color: #bbb; margin-right: 5px; margin-top: -4px; }
.form { height: 300px; background: #fff; padding: 4px 0 0 13px; overflow: hidden; }
.f { display: flex; height: 37.500px; }
.f label { width: 115px; line-height: 24.500px; }
.in { width: 105px; height: 31px; border: 1px solid #ccc; border-radius: 3px; line-height: 29px; padding-left: 7px; color: #111; }
.in.gray { background: #ccc; }
.in.pick { font-size: 16.250px; padding: 0 5px 0 12px; display: flex; justify-content: space-between; align-items: center; }
.f.last { margin-top: 75px; }
.mouse { margin-top: 13px; border: 1px solid #ccc; border-width: 1px 0 0 1px; display: grid; grid-template-columns: 122px 1fr; background: #eee; }
.mouse div { height: 30px; line-height: 30px; padding-left: 11px; border-bottom: 1px solid #ccc; }
.mouse div:nth-child(even) { border-left: 1px solid #ccc; padding-left: 6px; }

.float { position: absolute; background: #f9f9f9; border: 1px solid #ddd; box-shadow: 0 2px 8px rgba(0,0,0,.3); border-radius: 4px 4px 0 0; z-index: 10; }
.fh { height: 30px; background: #ededed; border-bottom: 1px solid #ccc; line-height: 29px; padding: 0 6px 0 5.500px; display: flex; justify-content: space-between; align-items: center; }
.fh i { width: 14px; height: 1.500px; background: #555; }
.fg { display: grid; }
.fg svg { width: 28px; height: 28px; fill: none; stroke: #333; stroke-width: 1.300; overflow: visible; }
.fg text { stroke: none; fill: #333; }
.wiring { left: 1661px; top: 250px; width: 262px; height: 115px; }
.wiring .fg { grid-template-columns: repeat(7, 35px); grid-auto-rows: 35px; padding: 9px 0 0 5px; place-items: center; }
.draw { left: 1784.500px; top: 471px; width: 86px; height: 290px; }
.draw .fh { line-height: 27px; padding-bottom: 1px; }
.draw .fg { grid-template-columns: 35px 35px; grid-auto-rows: 35px; padding: 8px 0 0 6px; place-items: center; }

/* taskbar */
.taskbar { height: 50px; flex: none; background: #1c1c1c; display: flex; color: #fff; font-family: "Open Sans", sans-serif; }
.start { width: 60px; flex: none; display: flex; align-items: center; justify-content: center; }
.search { width: 430px; flex: none; background: #323232; border: 1px solid #555; display: flex; align-items: center; gap: 14px; padding-left: 14px; font-size: 17.500px; color: #c8c8c8; }
.apps { flex: none; display: grid; grid-template-columns: repeat(6, 62px) 61px 62px 63px; margin-left: -1px; }
.app { position: relative; display: flex; align-items: center; justify-content: center; }
.app.run::after, .app.cur::after { content: ""; position: absolute; bottom: 0; left: 6px; right: 5px; height: 3px; background: #76b9ed; }
.app.cur { background: #4a4a4a; }
.app.cur::after { left: 0; right: 0; }
.app.mail svg { margin-left: 3px; }
.app.mail b { position: absolute; left: 37px; top: 24px; width: 21px; height: 21px; border: 1px solid #999; border-radius: 50%; background: #333; font-size: 13px; line-height: 19px; text-align: center; }
.tray { flex: 1; display: grid; grid-template-columns: 30px 255px 30px 30px 30px 31px 29px 30px 46px 90px 50px 1fr; padding-left: 205px; align-items: center; justify-items: center; font-size: 14px; letter-spacing: 0; }
.tray > svg:first-child { margin-left: 4px; }
.weather { display: flex; align-items: center; font-size: 17px; color: #a8a8a8; white-space: nowrap; justify-self: start; margin-left: 58px; letter-spacing: -.1px; }
.weather svg { margin-right: 11px; }
.weather span + span { margin-left: 11px; }
.clock { text-align: center; line-height: 23px; white-space: nowrap; }
.tray i { width: 1px; height: 50px; background: #555; justify-self: start; margin-left: 9px; }
```
FILE: script.js
```js
// Toolbar glyphs on a 24x24 box; "|" is a separator, the flag marks disabled ones
const toolbar = [
  ['<path d="M3 20V4h6l2 3h9v4M3 20l4-9h16l-3 9z"/>', 1],
  ['<path d="M3 3h14l4 4v14H3zM7 21v-7h10v7M7 3v5"/>', 0], '|',
  ['<path d="M7 2L2 6l5 4M3 6h15a5 5 0 0 1 0 14H5" transform="translate(-1 1)"/>', 0],
  ['<path d="M17 2l5 4-5 4M21 6H6a5 5 0 0 0 0 14h13" transform="translate(0 1)"/>', 0],
  ['<path d="M8 2h14v14H8zM5 7H2v15h14v-3M15 5v8M11 9h8"/>', 0],
  ['<path d="M2 2h13v12H2zM9 14v4l4 4h9V8h-7M14 22v-5H9"/>', 0],
  ['<path d="M7 1l9 15M17 1L8 16"/><circle cx="6" cy="19" r="3"/><circle cx="18" cy="19" r="3"/>', 0],
  ['<path d="M0 6h24M8 6V2h8v4M4 9v13h16V9M9 10v8M12 10v8M15 10v8"/>', 0], '|',
  ['<circle cx="11.500" cy="11" r="9.500"/><path d="M18 18l4 4"/>', 1],
  ['<path d="M2 4h20M2 10h8M2 15h7M2 21h10"/><circle cx="16" cy="14" r="4"/><path d="M19 17l3 4"/>', 1],
  ['<path d="M2 2v13c0 7 9 7 9 0V2"/><text x="14" y="22" font-size="16" style="font-weight:400">?</text>', 1], '|',
  ['<circle cx="11.500" cy="11.500" r="9.500"/><path d="M18.500 18.500l4 4M7 11.500h9M11.500 7v9"/>', 1],
  ['<circle cx="11.500" cy="11.500" r="9.500"/><path d="M18.500 18.500l4 4M7 11.500h9"/>', 1],
  ['<path d="M2 8V2h5M17 2h5v6M22 16v6h-5M7 22H2v-6M7 7h10v10H7z"/>', 1], '|',
  ['', 0], ['', 0], ['', 0], ['', 0], ['', 0],
  ['<path d="M21 2v20M10 4h8v6h-8zM3 14h15v6H3z"/>', 0],
  ['<path d="M2 2h20M4 6h6v17H4zM14 6h6v8h-6z"/>', 0],
  ['<path d="M2 23h20M4 11h6v8H4zM14 2h5v17h-5z"/>', 0],
  ['<path d="M2 12h3M11 12h3M20 12h3M5 2v20h6V2zM14 7v10h6V7z"/>', 0],
  ['<path d="M12 1v3M12 10v4M12 20v3M8 4h8v6H8zM4 14h16v6H4z"/>', 0],
  ['<path d="M22 1v22M2 4h14v16H2zM9 4v16M2 12h14"/>', 0],
  ['<path d="M9 1v7M14 1v7M3 12h6v11H3zM14 12h7v11h-7z"/>', 0],
  ['<path d="M2 9h6M2 15h6M12 2h9v7h-9zM12 14h9v8h-9z"/>', 0], '|',
  ['<path d="M2 2.500h20v19H2zM2 6h5l2 3h3M22 10l-3 4M2 21l4-4M22 19l-6-3h-4"/><circle cx="15" cy="8" r="3"/><circle cx="9" cy="17" r="3"/>', 1],
  ['<path d="M12 1l10 6-5 4M12 1L3 7l9 5 2-1M3 12l9 5M3 17l9 5M17 22V10M13 14l4-4 5 4"/>', 1], '|',
  ['<path d="M8 1l4 5 7-3-2 7 4 4-5 1M8 1v7l-6 4 6 2-1 7 6-5" stroke-width="1.600"/><path d="M13 13l2 5 6 5 1-2-5-6z" stroke-width="1.600"/>', 1], '|',
  ['<path d="M2.500 2v20h19V4.500h-10L9.500 2z"/><text x="12" y="18" font-size="13" text-anchor="middle">B</text>', 1], '|',
  ['<path d="M2.500 2v20h19V4.500h-10L9.500 2zM5 14l6-5v3c4 0 7 3 8 7-3-3-5-3-8-3v4z"/>', 1],
  ['<path d="M12 2l10 6-10 6L2 8zM2 12l10 6 10-6M2 16l10 6 10-6"/>', 1]
];
document.getElementById('tools').innerHTML = toolbar.map(t => t === '|' ? '<div class="sep"></div>'
  : `<div class="tb${t[1] ? '' : ' off'}"><svg viewBox="0 0 24 24">${t[0]}</svg></div>`).join('');

// Floating palettes, 28x28 glyphs centred on 0,0
const palette = (id, list) => { document.getElementById(id).innerHTML = list.map(p => `<svg viewBox="-14 -14 28 28">${p}</svg>`).join(''); };
palette('wiring', [
  '<circle cx="-9" cy="-7" r="2.500"/><circle cx="9" cy="7" r="2.500"/><path d="M-6.500-7H0V7h6.500"/>',
  '<path d="M-9-8h8V8M-1-4c1 4 3 5 9 5M-1 2c1 4 3 5 9 5M-1 1h9"/>',
  '<path d="M-9-8L8 8"/>',
  '<path d="M-10-9h20V4h-20zM0 4v5"/><text y="2" font-size="10" font-weight="bold" text-anchor="middle">N</text>',
  '<path d="M0-9v7M-10-2h20M-7 1.500H7M-4.500 5h9M-2 8.500h4"/>',
  '<path d="M0-10v8M-11-2h22L0 9z"/>',
  '<path d="M-12-8H4l8 8-8 8h-16z"/>',
  '<text y="-4.500" font-size="9.500" textLength="21" lengthAdjust="spacingAndGlyphs" font-weight="bold" text-anchor="middle">VCC</text><path d="M-10-1h20M0-1v11"/>',
  '<text y="-4.500" font-size="9.500" textLength="21" lengthAdjust="spacingAndGlyphs" font-weight="bold" text-anchor="middle">+5V</text><path d="M-10-1h20M0-1v11"/>',
  '<path d="M-8-8L8 8M8-8L-8 8"/>',
  '<path d="M-14 10l5-6M-9 4l2-4 8-8 3 3-8 8-4 2zM3-6c3-3 5-2 7-1 3 2 4 0 6-1"/>',
  '<circle cx="-10" cy="3" r="2.500"/><path d="M-7.500 3H7M7 0v6"/><text x="-2" y="0" font-size="10" font-weight="bold">1</text><text x="8" y="6.500" font-size="9" font-weight="bold">1</text>',
  '<path d="M-6-6h9V3h-9zM-2-2H7V7h-9zM-10-9h3v3h-3zM7-9h3v3H7zM-10 6h3v3h-3zM7 6h3v3H7z"/>'
]);
palette('draw', [
  '<path d="M-12-9h24V9h-24zM-1 2h13M-1 2v7M-1 5.500h13M6 2v7"/>',
  '<path d="M3-12L-13 3l26-4L-3 13" stroke-width="1.600"/>',
  '<path d="M-11 0c0 12 10 12 10 0S11-14 11 0"/>',
  '<path d="M10 2A10.500 10.500 0 1 0 0 10.500M-3 0h6M0-3v6"/>',
  '<path d="M-9-9L9 0-9 9l4-9z"/>',
  '<path d="M-8.500-8.500h17v5h-3v-1.500h-3v12h2v2h-8v-2h2v-12h-3v1.500h-4z"/>',
  '<path d="M-10 10l2-8L6-10l5 5L-3 8zM-8 2l5 6M-6.500 3.500L8-8M-4.500 5.500L9.500-6.500M4-8.500l5 5" stroke-width="1.500"/><path d="M-10 10l1-4 3 3z" fill="#333"/>',
  '<path d="M-9.500-9h19V9h-19z"/>',
  '<path d="M-12-9H4l8 9-8 9h-16l7-9z"/>',
  '<circle r="10.500"/>',
  '<path d="M8-6A10 10 0 1 0 8 7L1 0z"/>',
  '<path d="M-11-9h22V9h-22zM-11 2l7-5 8 6 7-3"/><circle cx="5" cy="-4.500" r="1.300" fill="#333"/>',
  '<path d="M-4 11c-3-3-6-6-6-8 1-2 4 1 5 2-2-4-5-9-3-10s4 5 5 7c-1-4-3-11 0-11s3 6 3 10c0-4 0-9 2-9s2 6 1 10c1-3 2-7 4-6s0 5 0 8c0 4-2 7-4 8s-5 1-7-1z"/>',
  '<path d="M-9-9H6M-9-9V7" stroke-width="1.600"/><path d="M5-12l6 3-6 3zM-12 5l3 6 3-6z" fill="#333" stroke="none"/><circle cx="-9" cy="-9" r="1.800" fill="#333"/>'
]);

// Rulers: 2.502 px per unit, a tick each 5 units
const unit = 2.502;
let h = '', ticks = '';
for (let u = 635; u <= 1180; u += 5) {
  const x = 330.4 + (u - 650) * unit;
  if (x < 286 || x > 1658) continue;
  ticks += `M${x.toFixed(1)} 279V${u % 50 === 0 ? 258 : u % 25 === 0 ? 265 : 273}`;
  if (u % 50 === 0) h += `<text x="${x + 2.500}" y="269">${u}</text>`;
}
document.getElementById('ruler-h').innerHTML = `<path d="${ticks}"/>${h}<path d="M285 279.500H1659" stroke-width="1.500"/><path class="mark" d="M1220.500 258V280" style="stroke-width:1.200"/>`;
h = ''; ticks = '';
for (let u = -30; u >= -335; u -= 5) {
  const y = 325.7 + (-50 - u) * unit;
  if (y < 281) continue;
  ticks += `M284 ${y.toFixed(1)}H${u % 50 === 0 ? 263 : u % 25 === 0 ? 270.5 : 278}`;
  if (u % 50 === 0) h += `<text transform="translate(264 ${y + 2}) rotate(90)">${u}</text>`;
}
document.getElementById('ruler-v').innerHTML = `<path d="${ticks}"/>${h}<path d="M284.500 280V1030" stroke-width="1.300"/><path class="mark" d="M263 337H284"/>`;

// Schematic sheet
let s = '';
const path = (cls, d) => { s += `<path class="${cls}" d="${d}"/>`; };
const text = (cls, x, y, t, end) => { s += `<text class="${cls}" x="${x}" y="${y}"${end ? ` text-anchor="${end}"` : ''}>${t}</text>`; };
let grid = '';
for (let x = 306.5; x < 1660; x += 25.02) grid += `M${Math.round(x) + .5} 280V1030`;
for (let y = 300.5; y < 1030; y += 25.02) grid += `M285 ${Math.round(y) + .5}H1660`;
path('grid', grid);
path('black', 'M693 280V1030M285 713H693');
path('red', 'M1553.500 280V1030M1578.300 280V1030M1553.500 715H1578.300');
text('frame', 1564.5, 469, 'A', 'middle');
text('frame', 1564.5, 960, 'B', 'middle');

[[0, 'LED1', 'R1'], [150, 'LED2', 'R5']].forEach(([dy, led, r]) => {
  const y = 362.7 + dy;
  text('lbl', 269.5, 310 + dy, led);
  text('lbl', 378.5, 322 + dy, r);
  text('lbl', 378.5, 344 + dy, '510');
  path('solid', `M285 ${y - 16}L306 ${y}L285 ${y + 13.5}z`);
  path('red', `M305.700 ${y - 21}v42M306 ${y}h36M368 ${y - 10.7}h51v21.500h-51z`);
  path('black', `M342 ${y}h25.500M419 ${y}h24`);
  path('green', `M443 ${y}h26`);
  path('red', `M302.500 ${y - 24.7}l12-12M312.700 ${y - 14.7}l12-12`);
  path('solid', `M321.800 ${y - 43.6}l-13.500 6.500 7.500 7.500zM331.600 ${y - 33.6}l-13.500 6.500 7.500 7.500z`);
});
path('black', 'M468.200 362.700V388M445 388H491.500L468.200 402z');
path('blue', 'M468.200 512.700L480.800 500.200H518.400V525.300H480.800z');
text('net', 521.5, 519, 'PC13');
text('net', 285, 1005.500, 'GND');

s += '<rect class="red" x="968" y="450.200" width="75.300" height="525.200" rx="5"/><rect class="red" x="1218" y="450.200" width="75.300" height="525.200" rx="5"/>';
s += '<circle class="solid" cx="975.500" cy="457.700" r="5.200"/><circle class="solid" cx="1285.700" cy="457.700" r="5.200"/>';
text('lbl', 993, 433, 'P3');
text('lbl', 1230.5, 436, 'P4');

const left = 'VBAT PC13 PC14 PC15 PA0 PA1 PA2 PA3 PA4 PA5 PA6 PA7 PB0 PB1 PB10 PB11 RESET VCC GND GND'.split(' ');
const right = 'VCC GND +5V PB9 PB8 PB7 PB6 PB5 PB4 PB3 PA15 PA12 PA11 PA10 PA9 PA8 PB15 PB14 PB13 PB12'.split(' ');
for (let i = 0; i < 20; i++) {
  const y = +(475.3 + 25.02 * i).toFixed(1), t = y - 12.5;
  path('red', `M944 ${y}H968M1293.500 ${y}H1317`);
  path('green', `M917.600 ${y}H944M1317 ${y}H1343.500`);
  path('blue', `M868 ${t}H906L917.600 ${y}L906 ${t + 25}H868zM1393.300 ${t}H1355.300L1343.500 ${y}L1355.300 ${t + 25}H1393.300z`);
  text('net', 864.7, y + 12.1, left[i], 'end');
  text('net', 1397, y + 5.5, right[i]);
  text('num', 967, y - 2, i + 1, 'end');
  text('num', 977.5, y + 9.7, i + 1);
  text('num', 1294.7, y - 2, i + 1);
  text('num', 1284, y + 9.7, i + 1, 'end');
}
document.getElementById('sheet').innerHTML = s;
```
